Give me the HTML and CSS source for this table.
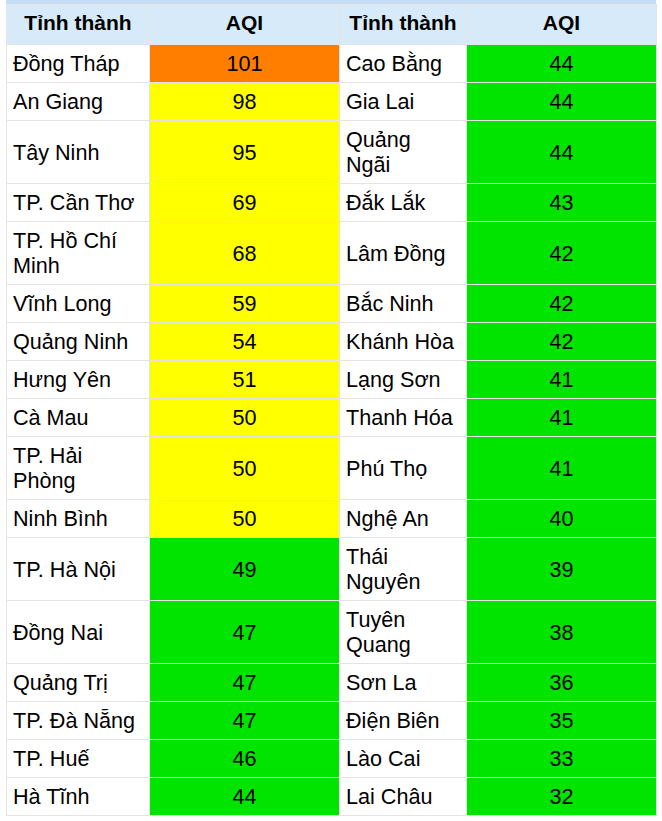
FILE: index.html
```html
<!DOCTYPE html>
<html lang="vi">
<head>
<meta charset="utf-8">
<link rel="stylesheet" href="styles.css">
</head>
<body>
<div class="wrap">
  <div class="strip"></div>
  <table class="aqi">
    <colgroup>
      <col class="c-name"><col class="c-val"><col class="c-name2"><col class="c-val">
    </colgroup>
    <thead>
      <tr><th>Tỉnh thành</th><th>AQI</th><th>Tỉnh thành</th><th>AQI</th></tr>
    </thead>
    <tbody>
      <tr><td>Đồng Tháp</td><td class="v orange">101</td><td>Cao Bằng</td><td class="v green">44</td></tr>
      <tr><td>An Giang</td><td class="v yellow">98</td><td>Gia Lai</td><td class="v green">44</td></tr>
      <tr><td>Tây Ninh</td><td class="v yellow">95</td><td>Quảng Ngãi</td><td class="v green">44</td></tr>
      <tr><td>TP. Cần Thơ</td><td class="v yellow">69</td><td>Đắk Lắk</td><td class="v green">43</td></tr>
      <tr><td>TP. Hồ Chí Minh</td><td class="v yellow">68</td><td>Lâm Đồng</td><td class="v green">42</td></tr>
      <tr><td>Vĩnh Long</td><td class="v yellow">59</td><td>Bắc Ninh</td><td class="v green">42</td></tr>
      <tr><td>Quảng Ninh</td><td class="v yellow">54</td><td>Khánh Hòa</td><td class="v green">42</td></tr>
      <tr><td>Hưng Yên</td><td class="v yellow">51</td><td>Lạng Sơn</td><td class="v green">41</td></tr>
      <tr><td>Cà Mau</td><td class="v yellow">50</td><td>Thanh Hóa</td><td class="v green">41</td></tr>
      <tr><td>TP. Hải Phòng</td><td class="v yellow">50</td><td>Phú Thọ</td><td class="v green">41</td></tr>
      <tr><td>Ninh Bình</td><td class="v yellow">50</td><td>Nghệ An</td><td class="v green">40</td></tr>
      <tr><td>TP. Hà Nội</td><td class="v green">49</td><td>Thái Nguyên</td><td class="v green">39</td></tr>
      <tr><td>Đồng Nai</td><td class="v green">47</td><td>Tuyên Quang</td><td class="v green">38</td></tr>
      <tr><td>Quảng Trị</td><td class="v green">47</td><td>Sơn La</td><td class="v green">36</td></tr>
      <tr><td>TP. Đà Nẵng</td><td class="v green">47</td><td>Điện Biên</td><td class="v green">35</td></tr>
      <tr><td>TP. Huế</td><td class="v green">46</td><td>Lào Cai</td><td class="v green">33</td></tr>
      <tr><td>Hà Tĩnh</td><td class="v green">44</td><td>Lai Châu</td><td class="v green">32</td></tr>
    </tbody>
  </table>
</div>
</body>
</html>
```
FILE: styles.css
```css
html, body {
  margin: 0;
  padding: 0;
  background: #ffffff;
}
.wrap {
  padding: 0 6px;
  width: 650px;
}
.strip {
  height: 4px;
  background: #c6ddf8;
}
.aqi {
  width: 650px;
  table-layout: fixed;
  border-collapse: collapse;
  font-family: "Liberation Sans", Arial, sans-serif;
  font-size: 21.6px;
  line-height: 25px;
  color: #000;
}
.c-name { width: 143px; }
.c-val { width: 190px; }
.c-name2 { width: 127px; }
.aqi th, .aqi td {
  border: 1px solid #e4e4e4;
  padding: 6px 7px 6px 6px;
  vertical-align: middle;
}
.aqi th {
  background: #d6eaf9;
  font-weight: bold;
  font-size: 21px;
  text-align: center;
  padding: 5px 6px 9px;
}
.aqi td { text-align: left; }
.aqi td.v { text-align: center; padding-left: 6px; padding-right: 6px; }
.orange { background: #ff7e00; }
.yellow { background: #ffff00; }
.green { background: #00e400; }
```
